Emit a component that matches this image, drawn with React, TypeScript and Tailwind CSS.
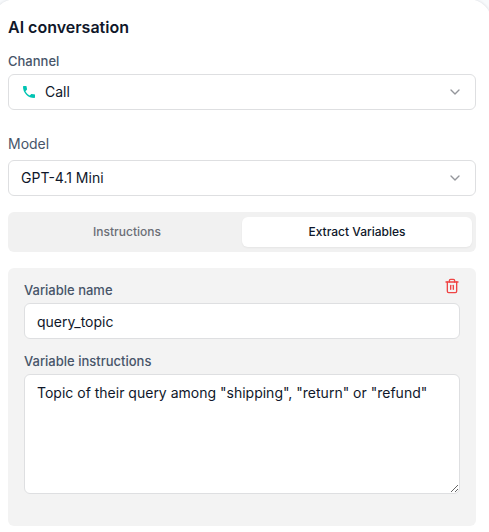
import { useState } from "react";
import { ChevronDown, Trash2 } from "lucide-react";
import { MdPhone } from "react-icons/md";

export default function App() {
  const [name, setName] = useState("query_topic");
  const [instructions, setInstructions] = useState(
    'Topic of their query among "shipping", "return" or "refund"'
  );

  return (
    <div className="h-[532px] w-full overflow-hidden bg-[#f8fafc] font-['Inter',sans-serif] text-sm text-[#0f172a] antialiased">
      <main className="-mt-px -ml-2 flex h-[600px] w-[500px] flex-col rounded-[24px] bg-white px-4 pt-4 shadow-[0_0_3px_rgba(15,23,42,0.15)]">
        <h1 className="text-base leading-6 font-semibold">AI conversation</h1>

        <label className="mt-3 text-[13px] leading-5 font-medium text-[#475569]">Channel</label>
        <button className="mt-[3px] flex h-9 items-center rounded-md border border-[#dedfe1] bg-white px-3">
          <MdPhone className="mr-2 size-4 text-[#00c4b3]" />
          <span>Call</span>
          <ChevronDown className="ml-auto size-4 text-[#94969b]" strokeWidth={2} />
        </button>

        <label className="mt-6 text-sm leading-5 text-[#475569]">Model</label>
        <button className="mt-[6px] flex h-9 items-center rounded-md border border-[#dedfe1] bg-white px-3">
          <span>GPT-4.1 Mini</span>
          <ChevronDown className="ml-auto size-4 text-[#94969b]" strokeWidth={2} />
        </button>

        <div className="mt-4 grid h-10 grid-cols-2 rounded-md bg-[#f1f1f1] p-[5px_4px] text-xs font-medium">
          <button className="rounded-md text-[#6b6e76]">Instructions</button>
          <button className="rounded-md bg-white shadow-xs">Extract Variables</button>
        </div>

        <section className="mt-4 flex h-[258px] flex-col rounded-md bg-[#f3f3f3] px-4 pt-[10px]">
          <div className="flex h-[22px] items-start justify-between">
            <label className="pt-[2px] text-[13px] leading-5 font-medium text-[#475569]">Variable name</label>
            <button aria-label="Delete variable" className="text-[#ef4444]">
              <Trash2 className="size-4" strokeWidth={2} />
            </button>
          </div>
          <input
            className="mt-[3px] h-9 rounded-md border border-[#dedfe1] bg-white px-3 text-sm outline-none"
            value={name}
            onChange={(e) => setName(e.target.value)}
          />
          <label className="mt-3 text-[13px] leading-5 font-medium text-[#475569]">Variable instructions</label>
          <textarea
            className="mt-[3px] h-[120px] shrink-0 rounded-md border border-[#dedfe1] bg-white px-3 py-2 text-sm outline-none"
            value={instructions}
            onChange={(e) => setInstructions(e.target.value)}
          />
        </section>
      </main>
    </div>
  );
}
